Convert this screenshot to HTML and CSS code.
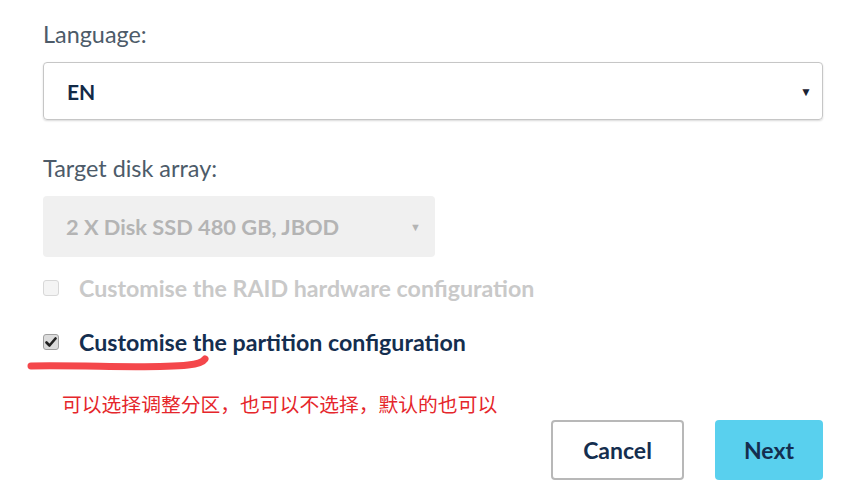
FILE: index.html
```html
<!DOCTYPE html>
<html lang="en">
<head>
  <meta charset="UTF-8">
  <meta name="viewport" content="width=device-width, initial-scale=1.0">
  <title>Install options</title>
  <link rel="stylesheet" href="styles.css">
</head>
<body>
  <div class="form">
    <div class="field">
      <label class="field-label">Language:</label>
      <div class="select">
        <span class="select-value">EN</span>
        <span class="select-arrow">&#9660;</span>
      </div>
    </div>

    <div class="field">
      <label class="field-label">Target disk array:</label>
      <div class="select select-disabled">
        <span class="select-value">2 X Disk SSD 480 GB, JBOD</span>
        <span class="select-arrow">&#9660;</span>
      </div>
    </div>

    <div class="check check-disabled">
      <span class="box"></span>
      <span class="check-label">Customise the RAID hardware configuration</span>
    </div>

    <div class="check check-on">
      <span class="box">
        <svg width="12" height="12" viewBox="0 0 12 12"><path d="M1.5 6.5 L4.5 9.5 L10.5 2.5" fill="none" stroke="#222" stroke-width="2.6" stroke-linecap="round" stroke-linejoin="round"/></svg>
      </span>
      <span class="check-label">Customise the partition configuration</span>
      <svg class="scribble" width="220" height="20" viewBox="0 0 220 20"><path d="M31 12 C 90 11, 150 15, 188 11 C 198 10, 203 8, 205 5" fill="none" stroke="#f4474b" stroke-width="7" stroke-linecap="round"/></svg>
    </div>

    <p class="note">可以选择调整分区，也可以不选择，默认的也可以</p>

    <div class="actions">
      <button class="btn btn-cancel">Cancel</button>
      <button class="btn btn-next">Next</button>
    </div>
  </div>
</body>
</html>
```

FILE: styles.css
```css
/* page */
body {
  margin: 0;
  background-color: #fff;
  font-family: Lato, "Open Sans", sans-serif;
}

.form {
  width: 780px;
  margin-left: 43px;
  padding-top: 20px;
}

/* selects */
.field {
  margin-bottom: 34px;
}

.field-label {
  display: block;
  font-size: 23.4px;
  line-height: 28px;
  color: #4d5b69;
  margin-bottom: 14px;
}

.select {
  display: flex;
  align-items: center;
  justify-content: space-between;
  height: 56px;
  padding: 0 10px 0 23px;
  border: 1px solid #c6c6c6;
  border-radius: 4px;
  box-shadow: 0 1px 2px rgba(0,0,0,0.15);
}

.select-value {
  font-size: 21px;
  font-weight: bold;
  color: #122a47;
}

.select-arrow {
  font-size: 12px;
  color: #1a2233;
}

.select-disabled {
  width: 355px;
  height: 61px;
  padding-right: 14px;
  border: none;
  box-shadow: none;
  background-color: #f0f0f0;
}

.select-disabled .select-value {
  font-size: 21.8px;
  color: #b4b4b4;
}

.select-disabled .select-arrow {
  color: #b4b4b4;
  font-size: 11px;
}

/* checkboxes */
.check {
  position: relative;
  display: flex;
  align-items: center;
  height: 30px;
  margin-bottom: 24px;
}

.check-disabled {
  margin-top: -18px;
}

.box {
  display: flex;
  align-items: center;
  justify-content: center;
  width: 14px;
  height: 14px;
  border: 1px solid #d8d8d8;
  border-radius: 3px;
  background-color: #f4f4f4;
  margin-right: 20px;
}

.check-label {
  font-size: 23.2px;
  font-weight: bold;
  color: #142e4f;
}

.check-disabled .check-label {
  color: #c9c9c9;
}

.check-on .box {
  border-color: #a0a0a0;
  background-color: #dcdcdc;
}

.scribble {
  position: absolute;
  left: -43px;
  top: 27px;
}

.note {
  margin: 35px 0 0 19px;
  font-family: "Noto Sans CJK SC", sans-serif;
  font-size: 19.8px;
  line-height: 24px;
  color: #e5262b;
}

/* buttons */
.actions {
  display: flex;
  justify-content: flex-end;
  gap: 31px;
  margin-top: 4px;
}

.btn {
  height: 60px;
  font-family: Lato, "Open Sans", sans-serif;
  font-size: 23px;
  font-weight: bold;
  color: #142e4f;
  border-radius: 4px;
  cursor: pointer;
}

.btn-cancel {
  width: 133px;
  background-color: #fff;
  border: 2px solid #b8b8b8;
}

.btn-next {
  width: 108px;
  background-color: #59d0ee;
  border: none;
}
```
